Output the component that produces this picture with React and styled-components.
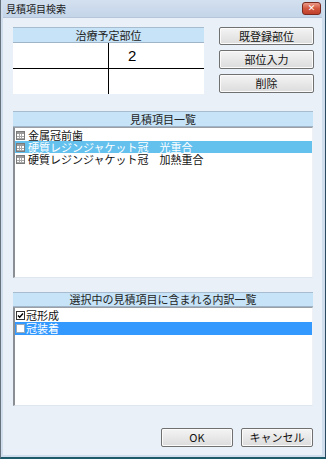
import React from 'react'
import styled, { createGlobalStyle } from 'styled-components'

const Global = createGlobalStyle`
  html, body { margin: 0; padding: 0; background: #fff; }
  * { box-sizing: border-box; }
`

const jp = `"Noto Sans CJK JP", "Noto Sans", sans-serif`

const Window = styled.div`
  width: 326px;
  height: 459px;
  display: flex;
  flex-direction: column;
  background: #cfdded;
  border-left: 1px solid #66727e;
  border-right: 1px solid #2b4a62;
  border-bottom: 2px solid #1d5a6a;
  padding: 0 3px 2px 2px;
  font-family: ${jp};
`

const TitleBar = styled.div`
  height: 17px;
  display: flex;
  align-items: center;
  justify-content: space-between;
  padding-left: 3px;
  background: linear-gradient(#d3e0ef, #c4d5e9);
  font-size: 10px;
  line-height: 12px;
  color: #1a1a1a;
  flex-shrink: 0;
`

const CloseBtn = styled.div`
  width: 19px;
  height: 13px;
  margin-right: 1px;
  border: 1px solid #7b2a1f;
  border-radius: 3px;
  background: linear-gradient(#eb9a88, #d2573f 50%, #c0402b);
  color: #fff;
  font-family: "DejaVu Sans", sans-serif;
  font-weight: bold;
  font-size: 9px;
  line-height: 11px;
  text-align: center;
`

const Body = styled.div`
  flex: 1;
  display: flex;
  flex-direction: column;
  background: #e9f0f8;
  border-top: 1px solid #b6c6d8;
  padding: 9px 8px 0 10px;
`

const TopRow = styled.div`
  display: flex;
  gap: 15px;
  height: 67px;
`

const Chart = styled.div`
  width: 191px;
  display: flex;
  flex-direction: column;
`

const PanelHead = styled.div`
  height: ${p => p.$h}px;
  background: #c6e3f7;
  border-top: 1px solid #a8bccf;
  border-bottom: 1px solid #9fb4c6;
  display: flex;
  align-items: center;
  justify-content: center;
  font-size: 11px;
  line-height: 13px;
  color: #222;
  flex-shrink: 0;
`

const Quadrants = styled.div`
  flex: 1;
  display: grid;
  grid-template-columns: 96px 1fr;
  grid-template-rows: 26px 1fr;
  background: #fff;
`

const Cell = styled.div`
  border-right: ${p => (p.$right ? '1px solid #000' : 'none')};
  border-bottom: ${p => (p.$bottom ? '1px solid #000' : 'none')};
  font-family: "Liberation Sans", Arial, sans-serif;
  font-size: 15px;
  line-height: 15px;
  padding: 5px 0 0 19px;
  color: #000;
`

const SideButtons = styled.div`
  display: flex;
  flex-direction: column;
  gap: 5px;
  width: 95px;
`

const Button = styled.button`
  width: ${p => p.$w}px;
  height: ${p => p.$h}px;
  padding: 0;
  border: 1px solid #707070;
  border-radius: 2px;
  background: linear-gradient(#f4f4f4, #e8e8e8 50%, #dcdcdc);
  box-shadow: inset 0 0 0 1px #fbfbfb;
  font-family: ${jp};
  font-size: 11px;
  line-height: 13px;
  color: #111;
`

const Panel = styled.div`
  margin-top: ${p => p.$top}px;
  height: ${p => p.$h}px;
  width: 300px;
  display: flex;
  flex-direction: column;
`

const List = styled.div`
  flex: 1;
  background: #fff;
  border-left: 2px solid #8a8f96;
  border-top: 1px solid #9aa0a6;
  border-right: 1px solid #eef2f6;
  border-bottom: 1px solid #dfe6ee;
  padding-top: 1px;
`

const Row = styled.div`
  height: ${p => p.$h}px;
  line-height: ${p => p.$h}px;
  display: flex;
  align-items: center;
  gap: ${p => p.$gap}px;
  padding-left: 1px;
  background: ${p => p.$sel || 'transparent'};
  color: ${p => (p.$sel ? '#fff' : '#111')};
  font-size: 11px;
  white-space: pre;
`

const Footer = styled.div`
  margin-top: 22px;
  display: flex;
  justify-content: flex-end;
  gap: 8px;
  padding-right: 1px;
`

const TableIcon = () => (
  <svg width="9" height="9" viewBox="0 0 9 9" style={{ flexShrink: 0 }}>
    <rect x="0.5" y="0.5" width="8" height="8" fill="#fff" stroke="#7a7a7a" />
    <rect x="1" y="1" width="7" height="2" fill="#9a9a9a" />
    <path d="M1 5.5H8M1 7.5H8M3.5 3V8M5.5 3V8" stroke="#a8a8a8" strokeWidth="1" />
  </svg>
)

const CheckBox = ({ checked }) => (
  <svg width="9" height="9" viewBox="0 0 9 9" style={{ flexShrink: 0 }}>
    <rect x="0.5" y="0.5" width="8" height="8" fill="#fff" stroke={checked ? '#333' : '#9ab'} />
    {checked && <path d="M2 4.5L3.7 6.3L7 2.5" fill="none" stroke="#000" strokeWidth="1.4" />}
  </svg>
)

const items = [
  { text: '金属冠前歯' },
  { text: '硬質レジンジャケット冠　光重合', sel: true },
  { text: '硬質レジンジャケット冠　加熱重合' },
]

const details = [
  { text: '冠形成', checked: true },
  { text: '冠装着', sel: true },
]

export default function App() {
  return (
    <>
      <Global />
      <Window>
        <TitleBar>
          <span>見積項目検索</span>
          <CloseBtn>✕</CloseBtn>
        </TitleBar>
        <Body>
          <TopRow>
            <Chart>
              <PanelHead $h={16}>治療予定部位</PanelHead>
              <Quadrants>
                <Cell $right $bottom />
                <Cell $bottom>2</Cell>
                <Cell $right />
                <Cell />
              </Quadrants>
            </Chart>
            <SideButtons>
              <Button $w={95} $h={18}>既登録部位</Button>
              <Button $w={95} $h={19}>部位入力</Button>
              <Button $w={95} $h={19}>削除</Button>
            </SideButtons>
          </TopRow>

          <Panel $top={17} $h={167}>
            <PanelHead $h={16}>見積項目一覧</PanelHead>
            <List>
              {items.map(it => (
                <Row key={it.text} $h={12} $gap={3} $sel={it.sel ? '#64c1ee' : ''}>
                  <TableIcon />
                  {it.text}
                </Row>
              ))}
            </List>
          </Panel>

          <Panel $top={14} $h={114}>
            <PanelHead $h={15}>選択中の見積項目に含まれる内訳一覧</PanelHead>
            <List>
              {details.map(it => (
                <Row key={it.text} $h={13} $gap={1} $sel={it.sel ? '#3399ff' : ''}>
                  <CheckBox checked={it.checked} />
                  {it.text}
                </Row>
              ))}
            </List>
          </Panel>

          <Footer>
            <Button $w={72} $h={19}>OK</Button>
            <Button $w={72} $h={19}>キャンセル</Button>
          </Footer>
        </Body>
      </Window>
    </>
  )
}
